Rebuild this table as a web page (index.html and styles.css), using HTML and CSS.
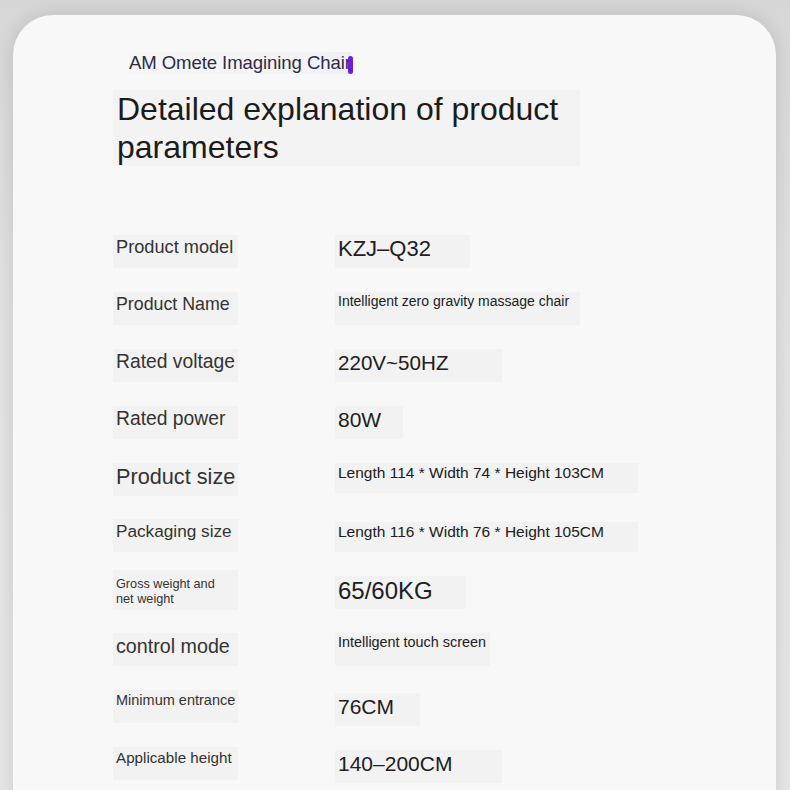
FILE: index.html
```html
<!DOCTYPE html>
<html>
<head>
<meta charset="utf-8">
<link rel="stylesheet" href="styles.css">
</head>
<body>
<div class="card">
  <div class="brand"><span class="brand-text">AM Omete Imagining Chair</span><span class="caret"></span></div>
  <h1 class="title">Detailed explanation of product parameters</h1>
  <div class="params">
    <div class="cell label"><span class="box lbox l-model">Product model</span></div>
    <div class="cell value"><span class="box v1 f22">KZJ–Q32</span></div>

    <div class="cell label"><span class="box lbox l-name">Product Name</span></div>
    <div class="cell value"><span class="box v2 f14">Intelligent zero gravity massage chair</span></div>

    <div class="cell label"><span class="box lbox l-volt">Rated voltage</span></div>
    <div class="cell value"><span class="box v3 f206">220V~50HZ</span></div>

    <div class="cell label"><span class="box lbox l-volt">Rated power</span></div>
    <div class="cell value"><span class="box v4 f21">80W</span></div>

    <div class="cell label"><span class="box lbox l-size">Product size</span></div>
    <div class="cell value"><span class="box v5 f155">Length 114 * Width 74 * Height 103CM</span></div>

    <div class="cell label"><span class="box lbox l-pack">Packaging size</span></div>
    <div class="cell value"><span class="box v5 f155 dn">Length 116 * Width 76 * Height 105CM</span></div>

    <div class="cell label"><span class="box lbox l-gross two">Gross weight and<br>net weight</span></div>
    <div class="cell value"><span class="box v6 f24">65/60KG</span></div>

    <div class="cell label"><span class="box lbox l-ctrl">control mode</span></div>
    <div class="cell value"><span class="box v7 f144">Intelligent touch screen</span></div>

    <div class="cell label"><span class="box lbox l-min">Minimum entrance</span></div>
    <div class="cell value"><span class="box v8 f21 dn">76CM</span></div>

    <div class="cell label"><span class="box lbox l-app">Applicable height</span></div>
    <div class="cell value"><span class="box v3 f21 dn">140–200CM</span></div>
  </div>
</div>
</body>
</html>
```
FILE: styles.css
```css
html, body {
  margin: 0;
  padding: 0;
  height: 790px;
  overflow: hidden;
}
body {
  background: linear-gradient(180deg, #d6d6d6 0%, #e2e2e2 40%, #e6e6e6 100%);
  font-family: "Liberation Sans", "Noto Sans CJK SC", sans-serif;
  color: #2b2b2b;
}
.card {
  margin: 15px 14px 0 13px;
  height: 820px;
  background: #f8f8f8;
  border-radius: 40px 40px 0 0;
  box-shadow: 0 0 18px rgba(0, 0, 0, 0.12);
  padding: 35px 0 0 100px;
  box-sizing: border-box;
}
.brand {
  display: flex;
  align-items: center;
  padding-left: 16px;
  height: 26px;
}
.brand-text {
  font-size: 18.6px;
  color: #2c2c44;
  letter-spacing: -0.1px;
  background: linear-gradient(90deg, #f6f6f8 0%, #f3f3f6 80%, #eeeefa 100%);
}
.caret {
  width: 5px;
  height: 18px;
  border-radius: 3px;
  background: #6a1ee0;
  margin-left: -3px;
  margin-top: 3px;
}
.title {
  margin: 14px 0 0 0;
  width: 467px;
  box-sizing: border-box;
  padding: 0 0 0 4px;
  background: #f3f3f3;
  font-weight: normal;
  font-size: 32px;
  line-height: 38px;
  color: #1b1b1b;
}
.params {
  margin-top: 69px;
  display: grid;
  grid-template-columns: 222px 1fr;
  grid-auto-rows: 56.9px;
}
.cell {
  display: flex;
  align-items: flex-start;
}
.box {
  display: block;
  box-sizing: border-box;
  background: #f2f2f2;
  padding: 0 4px 0 3px;
  height: 33px;
  color: #2d2d2d;
  white-space: nowrap;
}
.lbox {
  width: 125px;
  color: #333;
}
.value .box { color: #202020; }
.dn { margin-top: 3px; }
.v1 { width: 135px; }
.v2 { width: 245px; }
.v3 { width: 167px; }
.v4 { width: 68px; }
.v5 { width: 303px; height: 30px; }
.v6 { width: 131px; }
.v7 { width: 155px; }
.v8 { width: 85px; }
.l-model { font-size: 18.2px; line-height: 24px; }
.l-name { font-size: 17.8px; line-height: 24px; }
.l-volt { font-size: 19.3px; line-height: 26px; }
.l-size { font-size: 21.7px; line-height: 28px; }
.l-pack { font-size: 17.2px; line-height: 24px; }
.l-gross { font-size: 12.7px; line-height: 15px; }
.l-ctrl { font-size: 19.7px; line-height: 26px; }
.l-min { font-size: 14.5px; line-height: 20px; }
.l-app { font-size: 15.2px; line-height: 21px; }
.f14 { font-size: 14px; line-height: 18px; }
.f144 { font-size: 14.4px; line-height: 18px; }
.f155 { font-size: 15.5px; line-height: 20px; }
.f206 { font-size: 20.6px; line-height: 28px; }
.f21 { font-size: 21px; line-height: 28px; }
.f22 { font-size: 22px; line-height: 28px; }
.f24 { font-size: 24px; line-height: 30px; }
.two { padding-top: 7px; height: 40px; margin-top: -6px; }
```
